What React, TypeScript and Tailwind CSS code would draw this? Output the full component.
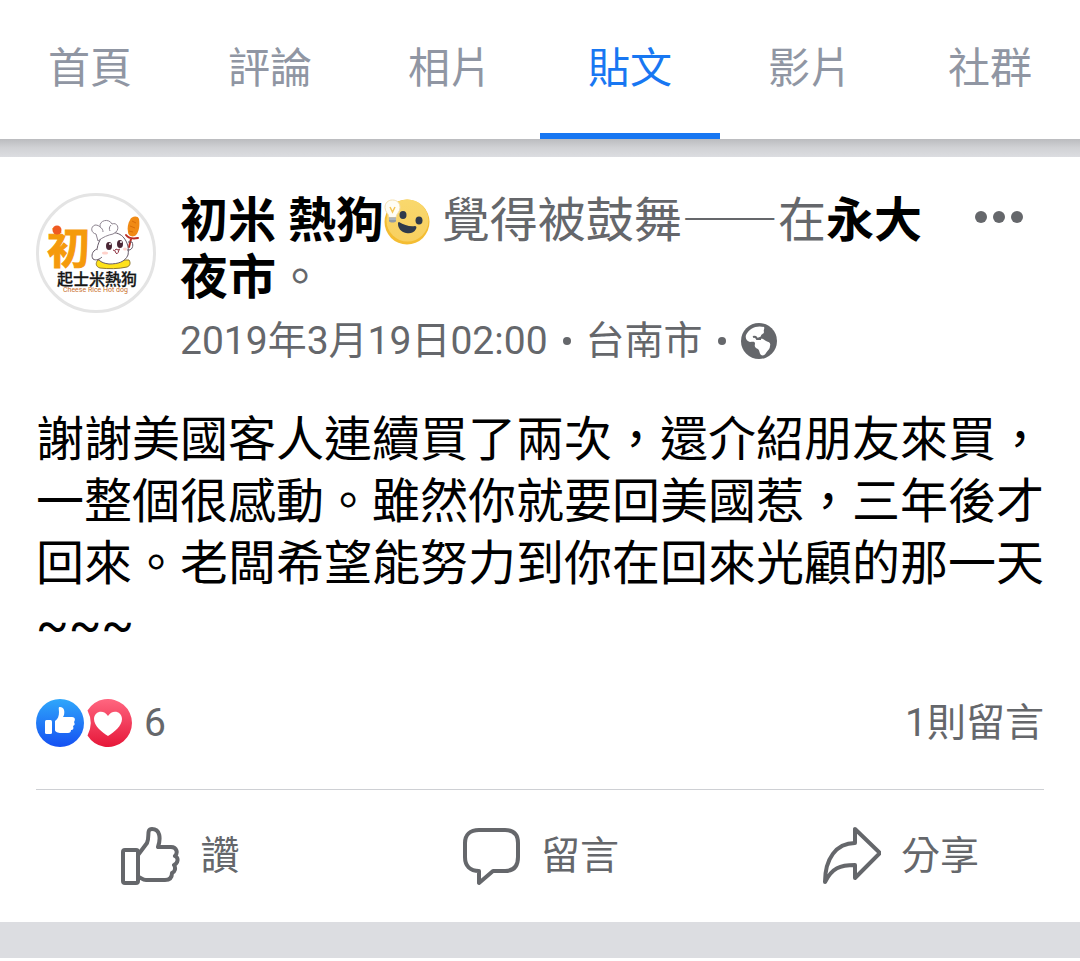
import type { ReactNode } from "react";

const tabs = ["首頁", "評論", "相片", "貼文", "影片", "社群"];
const activeTab = "貼文";

function Avatar() {
  return (
    <svg viewBox="0 0 120 120" className="size-[120px]" role="img" aria-label="初米 熱狗">
      <circle cx="60" cy="60" r="58.5" fill="#fff" stroke="#e4e4e4" strokeWidth="3" />
      <text x="11" y="71" fontSize="43" fontWeight="700" fill="#f59a0c" stroke="#f59a0c" strokeWidth="1">初</text>
      <circle cx="21" cy="37" r="4.5" fill="#ef5a22" />
      {/* hot dog */}
      <path d="M94 27c1-4 8-5 9-1 1 6 0 13-3 16-3 3-8 1-8-3-1-4 0-9 2-12z" fill="#f08a14" />
      <path d="M96 28l4 2M94 33l5 2M93 38l4 1" stroke="#d96d08" strokeWidth="1" />
      <path d="M90 42c3 4 7 4 12 3M95 46l-2 8" fill="none" stroke="#b92d24" strokeWidth="2" strokeLinecap="round" />
      {/* body */}
      <path d="M62 67c-3 3-2 7 2 8 9 1 18 1 27-1 3-1 4-4 2-7z" fill="#ffe21a" stroke="#8f7832" strokeWidth="1" />
      <path d="M64 47c4-9 18-10 24-2 4 5 5 11 4 17-3 7-10 9-19 9-9-1-13-5-12-12 0-5 1-8 3-12z" fill="#fff" stroke="#665a68" strokeWidth="1" />
      <path d="M61 56c-5 2-6 7-4 10 3 2 7 0 9-2" fill="#fff" stroke="#665a68" strokeWidth="1" />
      <path d="M91 57c5 1 7-4 5-8h-4" fill="none" stroke="#665a68" strokeWidth="1" />
      {/* chef hat */}
      <path d="M62 48l-2-7c-5-1-6-7-1-9 3 0 4 1 5 2-1-7 9-9 12-3 5-2 8 4 4 8l-3 2c-5 1-10 3-15 7z" fill="#fff" stroke="#8d8490" strokeWidth="1" />
      <path d="M64 34c2 1 3 3 3 5M75 32c-2 2-2 4-1 6" fill="none" stroke="#8d8490" strokeWidth="1" />
      <ellipse cx="73" cy="53" rx="3" ry="4" fill="#4a2634" />
      <ellipse cx="84" cy="51" rx="3" ry="4" fill="#4a2634" />
      <circle cx="74" cy="51" r="1" fill="#fff" />
      <circle cx="85" cy="49" r="1" fill="#fff" />
      <path d="M77 57q2 2 3-1q2 2 4 0M79 58q2 6 4-1" fill="none" stroke="#8e3140" strokeWidth="1" />
      <ellipse cx="69" cy="60" rx="3" ry="1.5" fill="#ffd2cb" />
      <ellipse cx="89" cy="56" rx="2" ry="1.5" fill="#ffd2cb" />
      <text x="21" y="92" fontSize="16" fontWeight="500" fill="#151515" stroke="#151515" strokeWidth="0.3">起士米熱狗</text>
      <text x="27" y="99" fontSize="7" fill="#c96f2c">Cheese Rice Hot dog</text>
    </svg>
  );
}

function InspiredIcon() {
  return (
    <svg viewBox="0 0 46 46" className="inline-block size-[46px] align-[-8px]" aria-hidden="true">
      <defs>
        <linearGradient id="face" x1="0" y1="0" x2="0" y2="1">
          <stop offset="0" stopColor="#f9d86d" />
          <stop offset="1" stopColor="#f8d060" />
        </linearGradient>
      </defs>
      <circle cx="23" cy="23" r="22.5" fill="#f4bd32" />
      <circle cx="23.5" cy="21.5" r="21" fill="url(#face)" />
      <ellipse cx="19" cy="16" rx="3.5" ry="4" fill="#2f3a4b" />
      <ellipse cx="35" cy="21.5" rx="3.5" ry="4" fill="#2f3a4b" />
      <path d="M15 23c5 3 11 5 16 4 1 0 2 1 1 3-2 4-6 5-10 4-5-1-8-5-8-9 0-1 0-2 1-2z" fill="#2f3a4b" />
      <path d="M8.5 1C4 1 1 4 1 8.5c0 5 4 6 4 10h7c0-4 4-5 4-10C16 4 13 1 8.500 1z" fill="#fffdf4" stroke="#f4dfae" />
      <path d="M6 8l2.500 5L11 8" fill="none" stroke="#f5c655" strokeWidth="1.5" />
      <path d="M5 18.500h7v4l-2 1H7l-2-1z" fill="#929aa3" />
      <path d="M5 20h7" stroke="#c7ccd1" strokeWidth="1" />
    </svg>
  );
}

function GlobeIcon() {
  return (
    <svg viewBox="0 0 36 36" className="size-9" role="img" aria-label="公開">
      <circle cx="18" cy="18" r="18" fill="#65676b" />
      <path
        d="M23 4c-7-2-15 1-18 8-1 4 1 6 4 7 3 0 5-1 5 2-1 3 1 4 3 5 2 2 1 4 3 6 2 1 4 0 5-2 2-3 4-4 4-7 1-3-1-4-4-5l-3-2c-2-1-4 1-6-1 2-1 4-1 4-2 0-2 3-2 3-4-1-2 1-3 0-5z"
        fill="#fff"
      />
      <path d="M12 14q3-1 4 2h4" fill="none" stroke="#65676b" strokeWidth="2" />
    </svg>
  );
}

function LikeBadge() {
  return (
    <svg viewBox="0 0 48 48" className="size-12" role="img" aria-label="讚">
      <defs>
        <linearGradient id="like" x1="0" y1="0" x2="0" y2="1">
          <stop offset="0" stopColor="#2fa7fb" />
          <stop offset="1" stopColor="#1550f2" />
        </linearGradient>
      </defs>
      <circle cx="24" cy="24" r="24" fill="url(#like)" />
      <rect x="9" y="21" width="7" height="14" rx="1.5" fill="#fff" />
      <path
        d="M19 22c3-2 4-5 4-9 0-3-1-5 1-5 4 0 5 4 4 8l-1 2h9c4 0 3 4 2 5 1 2 1 3-1 4 1 3 0 4-2 4 0 2-1 3-3 3h-7c-3 0-6-1-6-3z"
        fill="#fff"
      />
    </svg>
  );
}

function LoveBadge() {
  return (
    <svg viewBox="0 0 48 48" className="size-12" role="img" aria-label="大心">
      <defs>
        <linearGradient id="love" x1="0" y1="0" x2="0" y2="1">
          <stop offset="0" stopColor="#ff6680" />
          <stop offset="1" stopColor="#e61739" />
        </linearGradient>
      </defs>
      <path d="M3.500 11.500A24 24 0 1 1 3.500 36.500A27 27 0 0 0 3.500 11.500z" fill="url(#love)" />
      <path d="M24 37C18 33 10 27 10 20c0-8 10-10 14-3 4-7 14-5 14 3 0 7-8 13-14 17z" fill="#fff" />
    </svg>
  );
}

function LineIcon({ children }: { children: ReactNode }) {
  return (
    <svg
      viewBox="0 0 60 60"
      className="size-[60px]"
      fill="none"
      stroke="currentColor"
      strokeWidth="4"
      strokeLinejoin="round"
      strokeLinecap="round"
      aria-hidden="true"
    >
      {children}
    </svg>
  );
}

function Action({ label, icon }: { label: string; icon: ReactNode }) {
  return (
    <button type="button" className="flex items-center justify-center gap-5">
      <LineIcon>{icon}</LineIcon>
      <span>{label}</span>
    </button>
  );
}

export default function App() {
  return (
    <div lang="zh-TW" className="bg-white pb-[3px] font-[Roboto,'Noto_Sans_CJK_TC',sans-serif] text-[#65676b]">
      <nav className="grid grid-cols-6 bg-white">
        {tabs.map((tab) => (
          <a
            key={tab}
            href="#"
            aria-current={tab === activeTab ? "page" : undefined}
            className={
              tab === activeTab
                ? "flex h-[139px] items-center justify-center border-b-6 border-[#1877f2] pt-1 text-[42px] text-[#1877f2]"
                : "flex h-[139px] items-center justify-center border-b-6 border-transparent pt-1 text-[42px] text-[#9096a3]"
            }
          >
            {tab}
          </a>
        ))}
      </nav>

      <main className="bg-[#dcdde1] pb-9">
        <div className="h-[18px] bg-linear-to-b from-[#bbbcbf] via-[#d1d2d5] to-[#dcdde1]" />
        <article className="bg-white px-9 pt-9">
          <header className="flex items-start gap-6">
            <a href="#" className="shrink-0">
              <Avatar />
            </a>
            <div className="-mt-[5px] min-w-0 flex-1">
              <h1 className="text-5xl leading-[57px]">
                <a href="#" className="font-bold text-black">初米 熱狗</a>
                <InspiredIcon /> 覺得被鼓舞<span lang="ja" className="font-['Noto_Sans_CJK_JP',sans-serif]">——</span>在
                <a href="#" className="font-bold text-black">永大夜市</a>。
              </h1>
              <div className="flex items-center gap-[15px] pt-[5px] text-[39px] leading-[60px]">
                <a href="#">2019年3月19日02:00</a>
                <span className="size-2 rounded-full bg-current" />
                <a href="#">台南市</a>
                <span className="size-2 rounded-full bg-current" />
                <GlobeIcon />
              </div>
            </div>
            <button type="button" aria-label="更多選項" className="flex h-12 w-[90px] shrink-0 items-center justify-center gap-1.5">
              <span className="size-3 rounded-full bg-current" />
              <span className="size-3 rounded-full bg-current" />
              <span className="size-3 rounded-full bg-current" />
            </button>
          </header>

          <p className="pt-[38px] text-5xl leading-[62px] text-black">
            謝謝美國客人連續買了兩次，還介紹朋友來買，一整個很感動。雖然你就要回美國惹，三年後才回來。老闆希望能努力到你在回來光顧的那一天~~~
          </p>

          <div className="flex items-center justify-between border-b border-[#ced0d4] pt-9 pb-9 text-[39px] leading-[60px]">
            <a href="#" className="flex items-center">
              <LikeBadge />
              <LoveBadge />
              <span className="pl-3">6</span>
            </a>
            <a href="#">1則留言</a>
          </div>

          <div className="-mx-9 grid h-[132px] grid-cols-3 text-[39px]">
            <Action
              label="讚"
              icon={
                <>
                  <rect x="3" y="24" width="15" height="33" rx="2" />
                  <path d="M18 29l9-12c3-6-1-14 5-14 8 0 9 9 6 18h13c6 0 7 6 4 9 4 2 3 7-1 9 2 3 1 7-2 8 0 5-3 7-7 7H26c-4 0-5-3-8-3" />
                </>
              }
            />
            <Action
              label="留言"
              icon={<path d="M18 4h26c9 0 13 5 13 13v14c0 9-4 14-13 14H32L18 57V45C9 45 4 40 4 31V17C4 9 9 4 18 4z" />}
            />
            <Action
              label="分享"
              icon={<path d="M34 3v14C15 17 4 33 4 56c7-14 15-17 30-17v13l25-25z" />}
            />
          </div>
        </article>
      </main>
    </div>
  );
}
